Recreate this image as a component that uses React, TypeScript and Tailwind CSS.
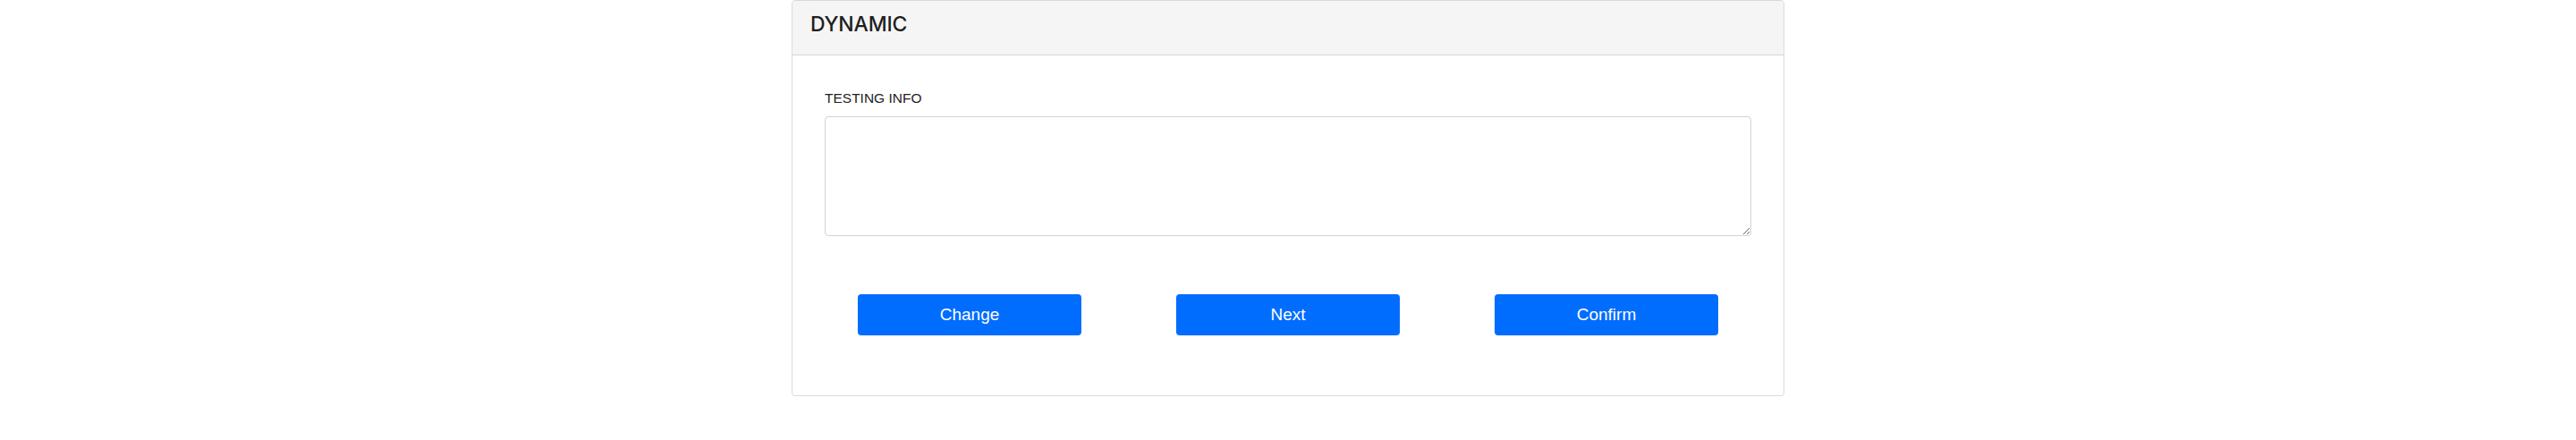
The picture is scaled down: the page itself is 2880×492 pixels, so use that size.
import React from 'react';

const buttons = ['Change', 'Next', 'Confirm'];

export default function App() {
    return (
        <div className="w-full min-h-[492px] bg-white font-['Liberation_Sans',Arial,sans-serif] text-[#212529]">
            <div className="w-[1110px] mx-auto border border-[#dadada] rounded-[4px] bg-white">
                {/* header */}
                <div className="h-[61px] bg-[#f5f5f5] border-b border-[#d5d5d5] flex items-center px-[20px] pb-[7px] rounded-t-[4px]">
                    <h5 className="font-['Inter',sans-serif] font-medium text-[23px] text-[#1f1f1f] tracking-[-0.2px] leading-none">DYNAMIC</h5>
                </div>

                {/* body */}
                <div className="px-[36px] pt-[37px] pb-[67px]">
                    <label className="block text-[15.5px] leading-[21px] mb-[10px] text-[#222]">TESTING INFO</label>
                    <textarea className="block w-full h-[134px] border border-[#ced4da] rounded-[4px] outline-none resize-y" />

                    <div className="flex gap-[106px] pl-[37px] mt-[65px]">
                        {buttons.map((b) => (
                            <button
                                key={b}
                                className="w-[250px] h-[46px] bg-[#006dff] text-white text-[19px] rounded-[4px]"
                            >
                                {b}
                            </button>
                        ))}
                    </div>
                </div>
            </div>
        </div>
    );
}
